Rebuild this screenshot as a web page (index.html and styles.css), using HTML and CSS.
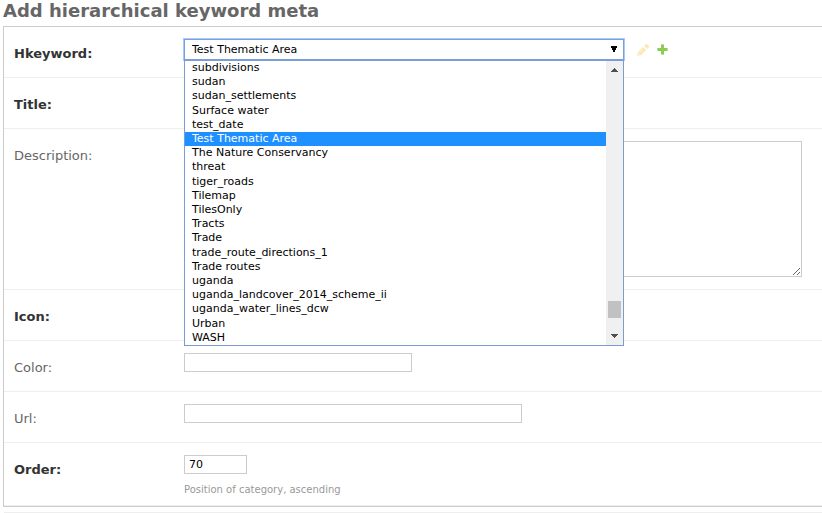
FILE: index.html
```
<!DOCTYPE html>
<html lang="en">
<head>
<meta charset="utf-8">
<title>Add hierarchical keyword meta</title>
<link rel="stylesheet" href="styles.css">
</head>
<body>
<main>
  <h1>Add hierarchical keyword meta</h1>
  <form>
    <fieldset class="module">
      <div class="row">
        <label class="required" for="hkeyword">Hkeyword:</label>
        <div class="field related">
          <div class="dropdown">
            <select id="hkeyword"><option>Test Thematic Area</option></select>
            <svg class="caret" width="8" height="8" viewBox="0 0 8 8"><path d="M1 1h6v2h-1v2h-1v2h-2v-2h-1v-2h-1z" fill="#000"/></svg>
            <div class="popup">
              <ul role="listbox">
                <li role="option">subdivisions</li>
                <li role="option">sudan</li>
                <li role="option">sudan_settlements</li>
                <li role="option">Surface water</li>
                <li role="option">test_date</li>
                <li role="option" class="selected" aria-selected="true">Test Thematic Area</li>
                <li role="option">The Nature Conservancy</li>
                <li role="option">threat</li>
                <li role="option">tiger_roads</li>
                <li role="option">Tilemap</li>
                <li role="option">TilesOnly</li>
                <li role="option">Tracts</li>
                <li role="option">Trade</li>
                <li role="option">trade_route_directions_1</li>
                <li role="option">Trade routes</li>
                <li role="option">uganda</li>
                <li role="option">uganda_landcover_2014_scheme_ii</li>
                <li role="option">uganda_water_lines_dcw</li>
                <li role="option">Urban</li>
                <li role="option">WASH</li>
              </ul>
              <div class="scrollbar">
                <svg width="7" height="4" viewBox="0 0 7 4"><path d="M3 0h1v1h1v1h1v1h1v1H0V3h1V2h1V1h1z" fill="#505050"/></svg>
                <span class="thumb"></span>
                <svg width="7" height="4" viewBox="0 0 7 4"><path d="M0 0h7v1H6v1H5v1H4v1H3V3H2V2H1V1H0z" fill="#505050"/></svg>
              </div>
            </div>
          </div>
          <a class="edit" href="#" aria-label="Edit"><svg width="12" height="12" viewBox="0 0 12 12"><path d="M0 12l1-4 5-5 3 3-5 5zM7 2l1-1 3 3-1 1z" fill="#f9e8b2"/><path d="M8 1l1-1h1l2 2v1l-1 1z" fill="#f9e8b2"/><path d="M2 9l4-4M1 10l1 1" stroke="#fffaf0" fill="none"/></svg></a>
          <a class="add" href="#" aria-label="Add"><svg width="11" height="11" viewBox="0 0 11 11"><path d="M4 0h3v4h4v3H7v4H4V7H0V4h4z" fill="#b9e299"/><path d="M4 1h3v3h3v3H7v3H4V7H1V4h3z" fill="#8ccc55"/></svg></a>
        </div>
      </div>
      <div class="row">
        <label class="required" for="title">Title:</label>
        <div class="field"><input class="wide" id="title" type="text"></div>
      </div>
      <div class="row">
        <label for="description">Description:</label>
        <div class="field"><textarea id="description"></textarea></div>
      </div>
      <div class="row">
        <label class="required" for="icon">Icon:</label>
        <div class="field"><input class="medium" id="icon" type="text"></div>
      </div>
      <div class="row">
        <label for="color">Color:</label>
        <div class="field"><input class="medium" id="color" type="text"></div>
      </div>
      <div class="row">
        <label for="url">Url:</label>
        <div class="field"><input class="wide" id="url" type="text"></div>
      </div>
      <div class="row">
        <label class="required" for="order">Order:</label>
        <div class="field">
          <input class="short" id="order" type="text" value="70" aria-describedby="order-help">
          <p class="help" id="order-help">Position of category, ascending</p>
        </div>
      </div>
    </fieldset>
    <hr>
  </form>
</main>
</body>
</html>
```
FILE: styles.css
```
* {
  box-sizing: border-box;
}

body {
  margin: 0;
  background: #fff;
  color: #333;
  font-family: Verdana, "DejaVu Sans", sans-serif;
  font-size: 13px;
}

main {
  padding-left: 3px;
}

h1 {
  margin: 0;
  padding-bottom: 4px;
  color: #666;
  font-size: 18px;
  line-height: 22px;
}

.module {
  min-width: 0;
  margin: 0;
  padding: 0;
  border: 1px solid #ccc;
  border-right: 0;
}

.row {
  display: flex;
  min-height: 51px;
  padding: 12px 10px;
  border-bottom: 1px solid #eee;
}

.row:last-child {
  padding-bottom: 8px;
}

.row > label {
  flex: 0 0 170px;
  padding-top: 6px;
  color: #666;
  line-height: 18px;
}

.row > .required {
  color: #333;
  font-weight: bold;
}

.field {
  flex: 1;
  min-width: 0;
}

.related {
  display: flex;
  align-items: flex-start;
}

.related a {
  display: block;
  padding-top: 5px;
}

.related svg {
  display: block;
}

.edit {
  margin-left: 13px;
}

.add {
  margin-left: 8px;
}

.dropdown {
  position: relative;
  width: 440px;
  height: 21px;
}

select,
input,
textarea {
  display: block;
  margin: 0;
  border: 1px solid #ccc;
  border-radius: 0;
  background: #fff;
  color: #000;
  font-family: inherit;
  font-size: 11px;
}

select {
  width: 100%;
  height: 21px;
  padding: 0 7px;
  border-color: #7b9fdc;
  outline: 1px solid #a9c8fb;
  outline-offset: 0;
  appearance: none;
}

.caret {
  position: absolute;
  top: 6px;
  right: 6px;
  pointer-events: none;
}

.popup {
  position: absolute;
  z-index: 1;
  top: 100%;
  left: 0;
  display: flex;
  width: 100%;
  border: 1px solid #7b9bd4;
  background: #fff;
}

ul {
  display: grid;
  flex: 1;
  grid-template-rows: repeat(20, 1fr);
  height: 284px;
  margin: 0;
  padding: 0;
  color: #000;
  font-size: 11px;
  line-height: 14px;
  list-style: none;
}

li {
  padding: 0 7px;
}

.selected {
  background: #1e90ff;
  color: #fff;
}

.scrollbar {
  display: flex;
  flex-direction: column;
  align-items: center;
  width: 17px;
  padding: 7px 0;
  background: #f0f0f0;
}

.thumb {
  width: 13px;
  height: 17px;
  margin: auto 0 16px;
  background: #c1c1c1;
}

input {
  height: 19px;
  padding: 0 4px;
}

.short {
  width: 63px;
}

.medium {
  width: 228px;
}

.wide {
  width: 338px;
}

textarea {
  width: 618px;
  max-width: 100%;
  height: 136px;
}

.help {
  margin: 0;
  padding-top: 9px;
  color: #999;
  font-size: 10px;
  line-height: 14px;
}

hr {
  margin: 5px 0 0 1px;
  border: 0;
  border-top: 1px solid #eee;
}
```
